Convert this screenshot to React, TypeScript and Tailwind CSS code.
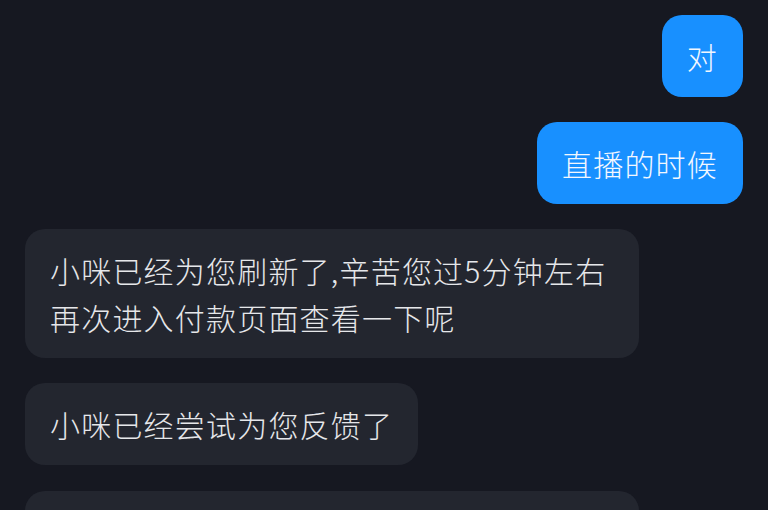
import React from "react";

const font = { fontFamily: '"Noto Sans CJK SC", "Noto Sans", sans-serif' };

function Mine({ text }: { text: string }) {
  return (
    <div className="flex justify-end">
      <div className="rounded-[20px] bg-[#1890ff] px-[25px] py-[17.5px] text-[30px] font-light leading-[47px] tracking-[1.2px] text-[#f2f7ff]">
        {text}
      </div>
    </div>
  );
}

function Theirs({ text, wide, extra }: { text: string; wide?: boolean; extra?: string }) {
  return (
    <div className={"flex justify-start " + (extra ?? "")}>
      <div
        className={
          (wide ? "w-[614px] " : "") +
          "rounded-[20px] bg-[#23262f] px-[25px] py-[17.5px] text-[30px] font-light leading-[47px] tracking-[1.2px] text-[#e6e7ea]"
        }
      >
        {text}
      </div>
    </div>
  );
}

export default function App() {
  return (
    <div
      className="h-[510px] w-[768px] overflow-hidden bg-[#161821] px-[25px] pt-[15px]"
      style={font}
    >
      <div className="flex flex-col gap-[25px]">
        <Mine text="对" />
        <Mine text="直播的时候" />
        <Theirs wide text="小咪已经为您刷新了,辛苦您过5分钟左右再次进入付款页面查看一下呢" />
        <Theirs text="小咪已经尝试为您反馈了" extra="mb-[1px]" />
        <Theirs wide text="如果还是无法正常付款的话,建议您稍后重新登录一下再试试哦" />
      </div>
    </div>
  );
}
